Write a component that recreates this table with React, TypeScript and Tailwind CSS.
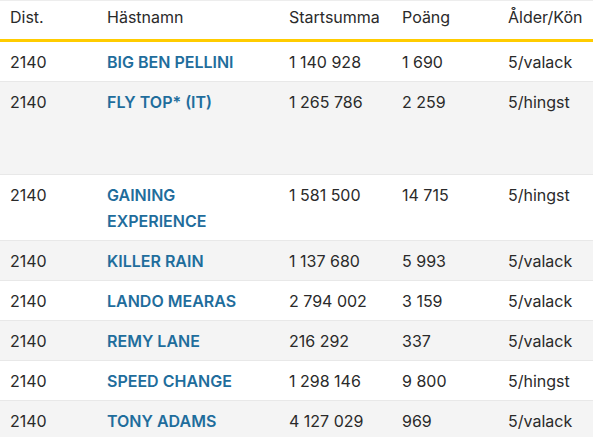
const rows = [
  { dist: '2140', name: 'BIG BEN PELLINI', sum: '1 140 928', points: '1 690', info: '5/valack', h: '' },
  { dist: '2140', name: 'FLY TOP* (IT)', sum: '1 265 786', points: '2 259', info: '5/hingst', h: 'min-h-[93px]' },
  { dist: '2140', name: 'GAINING EXPERIENCE', sum: '1 581 500', points: '14 715', info: '5/hingst', h: '' },
  { dist: '2140', name: 'KILLER RAIN', sum: '1 137 680', points: '5 993', info: '5/valack', h: '' },
  { dist: '2140', name: 'LANDO MEARAS', sum: '2 794 002', points: '3 159', info: '5/valack', h: '' },
  { dist: '2140', name: 'REMY LANE', sum: '216 292', points: '337', info: '5/valack', h: '' },
  { dist: '2140', name: 'SPEED CHANGE', sum: '1 298 146', points: '9 800', info: '5/hingst', h: '' },
  { dist: '2140', name: 'TONY ADAMS', sum: '4 127 029', points: '969', info: '5/valack', h: '' },
]

const cols = 'grid grid-cols-[97px_182px_113px_106px_1fr]'

export default function App() {
  return (
    <div
      className="w-[593px] h-[437px] overflow-hidden bg-white text-[16px] leading-[26px] text-[#2a2a2a]"
      style={{ fontFamily: 'Inter, "Noto Sans", sans-serif' }}
    >
      <div className={`${cols} border-t border-[#ededed] border-b-[3px] border-b-[#ffcc00] pt-[3px] pb-[9px]`}>
        <div className="pl-[10px]">Dist.</div>
        <div className="pl-[10px]">Hästnamn</div>
        <div className="pl-[10px]">Startsumma</div>
        <div className="pl-[10px]">Poäng</div>
        <div className="pl-[10px] whitespace-nowrap">Ålder/Kön</div>
      </div>
      {rows.map((r, i) => (
        <div
          key={r.name}
          className={`${cols} ${r.h} pt-[7px] pb-[6px] border-b border-[#e8e8e8] ${i % 2 === 1 ? 'bg-[#f4f4f4]' : 'bg-white'}`}
        >
          <div className="pl-[10px]">{r.dist}</div>
          <div className="pl-[10px] pr-[14px] font-semibold text-[#1f6d9c]">{r.name}</div>
          <div className="pl-[10px]">{r.sum}</div>
          <div className="pl-[10px]">{r.points}</div>
          <div className="pl-[10px] whitespace-nowrap">{r.info}</div>
        </div>
      ))}
    </div>
  )
}
